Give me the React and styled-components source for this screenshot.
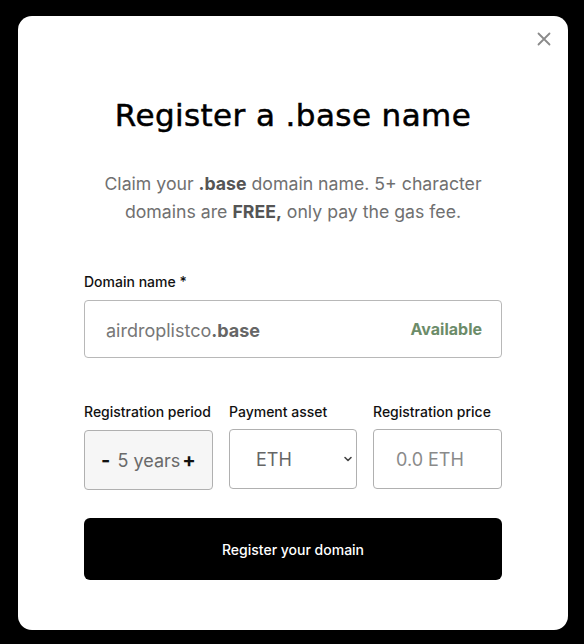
import styled, { createGlobalStyle } from 'styled-components';

const GlobalStyle = createGlobalStyle`
    html, body {
        margin: 0;
        padding: 0;
        background: #000;
    }
    body {
        padding: 16px 0 0 18px;
        font-family: Inter, "Noto Sans", sans-serif;
    }
`

const Card = styled.div`
    position: relative;
    box-sizing: border-box;
    width: 550px;
    height: 614px;
    padding: 80px 66px 0;
    background: #fff;
    border-radius: 14px;
    display: flex;
    flex-direction: column;
`
const CloseButton = styled.button`
    position: absolute;
    top: 13px;
    right: 14px;
    width: 20px;
    height: 20px;
    padding: 0;
    border: none;
    background: none;
    display: flex;
    align-items: center;
    justify-content: center;
    color: #8a8a8a;
`
const Title = styled.h2`
    margin: 0;
    font-family: "DejaVu Sans", sans-serif;
    font-weight: 400;
    font-size: 31px;
    line-height: 38px;
    color: #000;
    text-align: center;
    letter-spacing: 0.4px;
    -webkit-text-stroke: 0.5px #000;
`
const Subtitle = styled.p`
    margin: 36px 0 0;
    font-size: 17.7px;
    line-height: 28px;
    color: #707070;
    text-align: center;
    b {
        font-weight: 700;
        color: #555;
    }
`
const Label = styled.label`
    display: block;
    font-size: 14px;
    line-height: 20px;
    font-weight: 500;
    color: #111;
    white-space: nowrap;
    margin-bottom: ${p => p.$gap || 8}px;
`
const DomainField = styled.div`
    margin-top: 46px;
`
const DomainBox = styled.div`
    box-sizing: border-box;
    height: 58px;
    border: 1px solid #b8b8b8;
    border-radius: 4px;
    display: flex;
    align-items: center;
    justify-content: space-between;
    padding: 0 19px 0 21px;
`
const DomainText = styled.span`
    font-size: 18px;
    color: #777;
    padding-top: 2px;
    b {
        font-weight: 700;
        color: #666;
    }
`
const Status = styled.span`
    font-size: 16px;
    font-weight: 700;
    color: #6c8c69;
`
const OptionsRow = styled.div`
    margin-top: 44px;
    display: grid;
    grid-template-columns: 129px 128px 129px;
    column-gap: 16px;
`
const Box = styled.div`
    box-sizing: border-box;
    height: 60px;
    border: 1px solid #b0b0b0;
    border-radius: 4px;
    background: ${p => p.$muted ? '#f6f6f6' : '#fff'};
    display: flex;
    align-items: center;
    font-size: 18px;
    color: #6a6a6a;
`
const Stepper = styled(Box)`
    justify-content: center;
    gap: 4px;
`
const StepBtn = styled.span`
    font-weight: 700;
    font-size: 20px;
    color: #111;
    line-height: 1;
    margin-left: ${p => p.$left ? 0 : -2}px;
    margin-right: ${p => p.$left ? 3 : 0}px;
`
const SelectBox = styled(Box)`
    justify-content: space-between;
    padding: 0 3px 0 26px;
    color: #666;
`
const PriceBox = styled(Box)`
    padding-left: 22px;
    color: #8a8a8a;
`
const SubmitButton = styled.button`
    margin-top: 28px;
    height: 62px;
    width: 100%;
    border: none;
    border-radius: 6px;
    background: #000;
    color: #fff;
    font-family: Inter, sans-serif;
    font-size: 14px;
    font-weight: 500;
`

const App = () => {
    return (
        <>
            <GlobalStyle />
            <Card>
                <CloseButton aria-label="close">
                    <svg width="14" height="14" viewBox="0 0 14 14">
                        <path d="M1.5 1.5 L12.5 12.5 M12.5 1.5 L1.5 12.5" stroke="currentColor" strokeWidth="1.8" strokeLinecap="round" />
                    </svg>
                </CloseButton>
                <Title>Register a .base name</Title>
                <Subtitle>
                    Claim your <b>.base</b> domain name. 5+ character<br />
                    domains are <b>FREE,</b> only pay the gas fee.
                </Subtitle>

                <DomainField>
                    <Label>Domain name *</Label>
                    <DomainBox>
                        <DomainText>airdroplistco<b>.base</b></DomainText>
                        <Status>Available</Status>
                    </DomainBox>
                </DomainField>

                <OptionsRow>
                    <div>
                        <Label $gap={8}>Registration period</Label>
                        <Stepper $muted>
                            <StepBtn $left>-</StepBtn>
                            <span>5 years</span>
                            <StepBtn>+</StepBtn>
                        </Stepper>
                    </div>
                    <div>
                        <Label $gap={7}>Payment asset</Label>
                        <SelectBox>
                            <span>ETH</span>
                            <svg width="10" height="10" viewBox="0 0 10 10">
                                <path d="M2 3.5 L5 6.5 L8 3.5" fill="none" stroke="#444" strokeWidth="1.6" strokeLinecap="round" strokeLinejoin="round" />
                            </svg>
                        </SelectBox>
                    </div>
                    <div>
                        <Label $gap={7}>Registration price</Label>
                        <PriceBox>0.0 ETH</PriceBox>
                    </div>
                </OptionsRow>

                <SubmitButton>Register your domain</SubmitButton>
            </Card>
        </>
    );
}

export default App;
